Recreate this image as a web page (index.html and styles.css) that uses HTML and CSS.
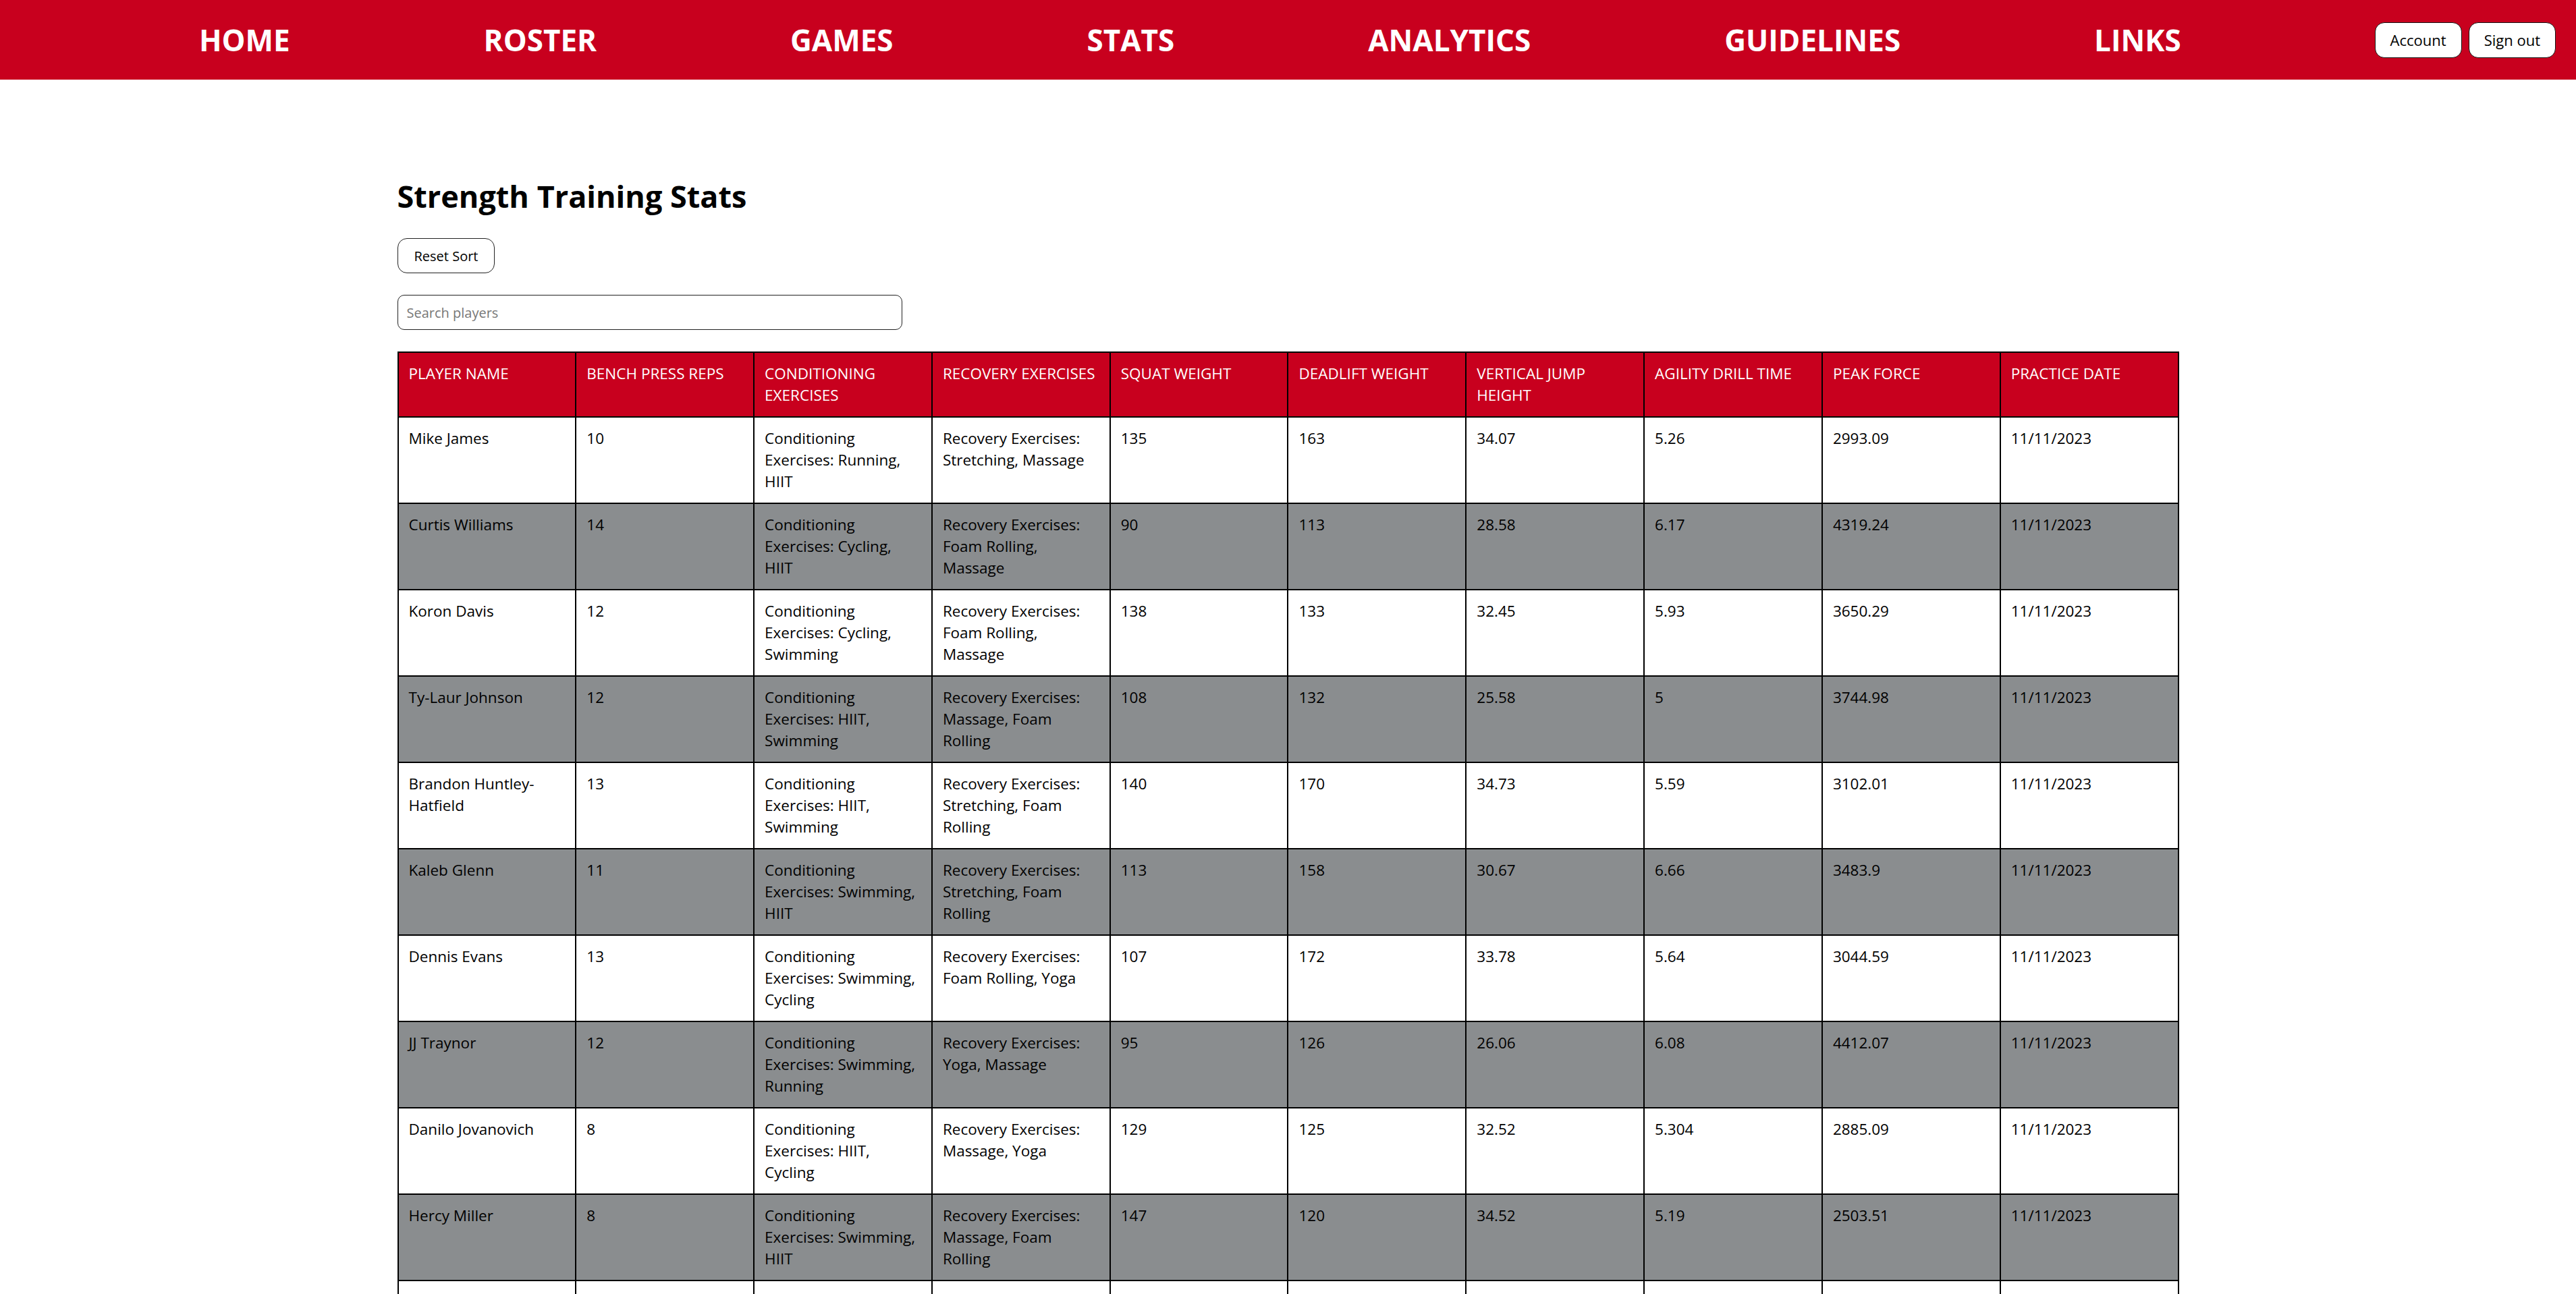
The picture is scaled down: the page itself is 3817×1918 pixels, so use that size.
FILE: index.html
```html
<!DOCTYPE html>
<html lang="en">
<head>
<meta charset="utf-8">
<title>Strength Training Stats</title>
<link rel="stylesheet" href="styles.css">
</head>
<body>
<header class="topbar">
  <ul class="nav-links">
    <li><a href="#">HOME</a></li>
    <li><a href="#">ROSTER</a></li>
    <li><a href="#">GAMES</a></li>
    <li><a href="#">STATS</a></li>
    <li><a href="#">ANALYTICS</a></li>
    <li><a href="#">GUIDELINES</a></li>
    <li><a href="#">LINKS</a></li>
  </ul>
  <div class="auth">
    <button class="auth-btn">Account</button>
    <button class="auth-btn">Sign out</button>
  </div>
</header>

<main class="content">
  <h1 class="title">Strength Training Stats</h1>
  <button class="reset-btn">Reset Sort</button>
  <input class="search" type="text" placeholder="Search players">

  <table class="stats">
    <thead>
      <tr>
        <th>PLAYER NAME</th>
        <th>BENCH PRESS REPS</th>
        <th>CONDITIONING EXERCISES</th>
        <th>RECOVERY EXERCISES</th>
        <th>SQUAT WEIGHT</th>
        <th>DEADLIFT WEIGHT</th>
        <th>VERTICAL JUMP HEIGHT</th>
        <th>AGILITY DRILL TIME</th>
        <th>PEAK FORCE</th>
        <th>PRACTICE DATE</th>
      </tr>
    </thead>
    <tbody>
      <tr>
        <td>Mike James</td><td>10</td><td>Conditioning Exercises: Running, HIIT</td><td>Recovery Exercises: Stretching, Massage</td><td>135</td><td>163</td><td>34.07</td><td>5.26</td><td>2993.09</td><td>11/11/2023</td>
      </tr>
      <tr>
        <td>Curtis Williams</td><td>14</td><td>Conditioning Exercises: Cycling, HIIT</td><td>Recovery Exercises: Foam Rolling, Massage</td><td>90</td><td>113</td><td>28.58</td><td>6.17</td><td>4319.24</td><td>11/11/2023</td>
      </tr>
      <tr>
        <td>Koron Davis</td><td>12</td><td>Conditioning Exercises: Cycling, Swimming</td><td>Recovery Exercises: Foam Rolling, Massage</td><td>138</td><td>133</td><td>32.45</td><td>5.93</td><td>3650.29</td><td>11/11/2023</td>
      </tr>
      <tr>
        <td>Ty-Laur Johnson</td><td>12</td><td>Conditioning Exercises: HIIT, Swimming</td><td>Recovery Exercises: Massage, Foam Rolling</td><td>108</td><td>132</td><td>25.58</td><td>5</td><td>3744.98</td><td>11/11/2023</td>
      </tr>
      <tr>
        <td>Brandon Huntley-Hatfield</td><td>13</td><td>Conditioning Exercises: HIIT, Swimming</td><td>Recovery Exercises: Stretching, Foam Rolling</td><td>140</td><td>170</td><td>34.73</td><td>5.59</td><td>3102.01</td><td>11/11/2023</td>
      </tr>
      <tr>
        <td>Kaleb Glenn</td><td>11</td><td>Conditioning Exercises: Swimming, HIIT</td><td>Recovery Exercises: Stretching, Foam Rolling</td><td>113</td><td>158</td><td>30.67</td><td>6.66</td><td>3483.9</td><td>11/11/2023</td>
      </tr>
      <tr>
        <td>Dennis Evans</td><td>13</td><td>Conditioning Exercises: Swimming, Cycling</td><td>Recovery Exercises: Foam Rolling, Yoga</td><td>107</td><td>172</td><td>33.78</td><td>5.64</td><td>3044.59</td><td>11/11/2023</td>
      </tr>
      <tr>
        <td>JJ Traynor</td><td>12</td><td>Conditioning Exercises: Swimming, Running</td><td>Recovery Exercises: Yoga, Massage</td><td>95</td><td>126</td><td>26.06</td><td>6.08</td><td>4412.07</td><td>11/11/2023</td>
      </tr>
      <tr>
        <td>Danilo Jovanovich</td><td>8</td><td>Conditioning Exercises: HIIT, Cycling</td><td>Recovery Exercises: Massage, Yoga</td><td>129</td><td>125</td><td>32.52</td><td>5.304</td><td>2885.09</td><td>11/11/2023</td>
      </tr>
      <tr>
        <td>Hercy Miller</td><td>8</td><td>Conditioning Exercises: Swimming, HIIT</td><td>Recovery Exercises: Massage, Foam Rolling</td><td>147</td><td>120</td><td>34.52</td><td>5.19</td><td>2503.51</td><td>11/11/2023</td>
      </tr>
      <tr class="row-filler">
        <td></td><td></td><td></td><td></td><td></td><td></td><td></td><td></td><td></td><td></td>
      </tr>
    </tbody>
  </table>
</main>
</body>
</html>
```

FILE: styles.css
```css
html, body {
  margin: 0;
  padding: 0;
  background: #ffffff;
  font-family: "Open Sans", "Noto Sans", "Liberation Sans", sans-serif;
  color: #000;
}

.topbar {
  height: 118px;
  background: #c8001e;
  display: flex;
  align-items: center;
}

.nav-links {
  flex: 1;
  display: flex;
  justify-content: space-evenly;
  align-items: center;
  list-style: none;
  margin: 0;
  padding: 0 0 0 8px;
}

.nav-links a {
  color: #ffffff;
  text-decoration: none;
  font-weight: 700;
  font-size: 44px;
  line-height: 1;
}

.auth {
  display: flex;
  gap: 10px;
  padding-right: 30px;
}

.auth-btn {
  height: 53px;
  padding: 0 22px;
  background: #ffffff;
  border: 1px solid #111;
  border-radius: 14px;
  font-family: "Open Sans", "Noto Sans", sans-serif;
  font-size: 22px;
  color: #000;
}

.content {
  width: 2640px;
  margin: 0 auto;
  padding-top: 141px;
  display: flex;
  flex-direction: column;
  align-items: flex-start;
}

.title {
  margin: 0;
  font-size: 45px;
  font-weight: 700;
  line-height: 64px;
}

.reset-btn {
  margin-top: 30px;
  height: 52px;
  padding: 0 24px;
  background: #ffffff;
  border: 1px solid #222;
  border-radius: 14px;
  font-family: "Open Sans", "Noto Sans", sans-serif;
  font-size: 20px;
  color: #000;
}

.search {
  margin-top: 32px;
  box-sizing: border-box;
  width: 748px;
  height: 52px;
  padding: 0 13px;
  border: 1px solid #222;
  border-radius: 10px;
  font-family: "Open Sans", "Noto Sans", sans-serif;
  font-size: 20px;
}

.search::placeholder {
  color: #777777;
}

.stats {
  margin-top: 32px;
  width: 2640px;
  table-layout: fixed;
  border-collapse: collapse;
  font-size: 22.5px;
  line-height: 32px;
}

.stats th,
.stats td {
  border: 2px solid #000;
  padding: 15px;
  text-align: left;
  vertical-align: top;
}

.stats th {
  background: #c8001e;
  color: #ffffff;
  font-weight: 400;
}

.stats tbody tr:nth-child(even) td {
  background: #8a8d8f;
}

.stats .row-filler td {
  height: 96px;
}
```
